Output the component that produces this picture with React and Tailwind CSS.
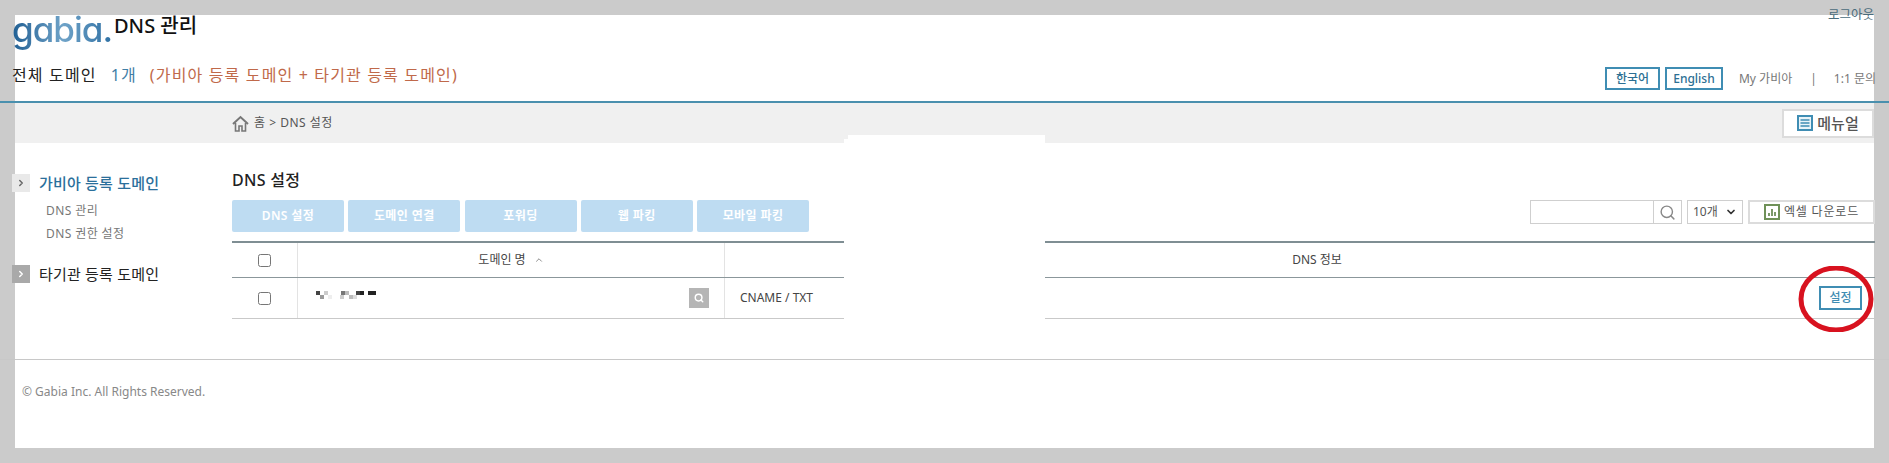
import { ChevronDown, ChevronRight, ChevronUp, Search } from "lucide-react";

const tabs = ["DNS 설정", "도메인 연결", "포워딩", "웹 파킹", "모바일 파킹"];

// 가려진 도메인 이름 (모자이크)
const mosaic = [
  [0, 0, "#444"], [4, 4, "#999"], [8, 0, "#ccc"], [12, 4, "#eee"], [24, 4, "#ccc"],
  [25, 0, "#777"], [29, 0, "#bbb"], [33, 4, "#bbb"], [37, 4, "#ddd"], [40, 0, "#444"],
  [44, 0, "#222"], [52, 0, "#222"], [56, 0, "#222"],
];

function HomeIcon() {
  return (
    <svg width="17" height="17" viewBox="0 0 17 17" fill="none" stroke="#777" strokeWidth="2">
      <path d="M1 9 8.5 2 16 9" />
      <path d="M3.5 8v8h3.5v-5h3v5h3.5V8" strokeWidth="1.6" />
    </svg>
  );
}

function MenuIcon() {
  return (
    <svg width="16" height="16" viewBox="0 0 16 16">
      <rect width="16" height="16" fill="#3f8db3" />
      <rect x="2" y="2" width="12" height="12" fill="#e8f3f8" />
      <path d="M3.5 5h9M3.5 8h9M3.5 11h9" stroke="#3f8db3" strokeWidth="1.5" />
    </svg>
  );
}

function ExcelIcon() {
  return (
    <svg width="16" height="16" viewBox="0 0 16 16">
      <rect x="1" y="1" width="14" height="14" fill="#fff" stroke="#6f9158" strokeWidth="2" />
      <path d="M5 12V9M8 12V5M11 12V8" stroke="#5d8046" strokeWidth="1.6" />
    </svg>
  );
}

function SideItem({ label, active }) {
  return (
    <div className="flex items-center gap-[9px] -ml-[3px]">
      <span className={`w-[18px] h-[18px] flex items-center justify-center ${active ? "bg-[#e9e9e9] text-[#666]" : "bg-[#a9a9a9] text-white"}`}>
        <ChevronRight size={10} strokeWidth={3.5} />
      </span>
      <span className={`text-[15px] tracking-[0.2px] leading-[18px] ${active ? "text-[#2b6f9b] font-medium" : "text-[#222]"}`}>
        {label}
      </span>
    </div>
  );
}

export default function App() {
  return (
    <div className="h-[463px] overflow-hidden bg-[#cbcbcb] p-[15px] font-['Noto_Sans','Noto_Sans_CJK_KR',sans-serif]">
      <div className="relative h-[433px] bg-white flex flex-col">
        {/* Top header */}
        <header className="h-[86px] flex flex-col">
          <div className="flex items-start h-[44px] -ml-[3px]">
            <span className="-mt-[12px] w-[102px] text-[35px] leading-[52px] font-['Inter',sans-serif] font-medium tracking-[-1px] [font-feature-settings:'cv11'] bg-gradient-to-r from-[#1f5f93] via-[#6fa3c8] to-[#2c6fa3] bg-clip-text text-transparent">
              gabia.
            </span>
            <span className="mt-[-2px] text-[20px] leading-[26px] font-medium text-[#111]">DNS 관리</span>
            <span className="ml-auto -mt-[9px] text-[12.5px] leading-[18px] text-[#4a6c7c]">로그아웃</span>
          </div>
          <div className="flex items-start -ml-[3px]">
            <div className="flex text-[16px] leading-[22px] tracking-[1.15px] mt-[5px]">
              <span className="text-[#222]">전체 도메인</span>
              <span className="ml-[14px] text-[#3f7ea6]">1개</span>
              <span className="ml-[13px] text-[#c0694a]">(가비아 등록 도메인 + 타기관 등록 도메인)</span>
            </div>
            <div className="ml-auto -mr-[2px] flex items-center mt-[8px] text-[12px] text-[#777]">
              <span className="w-[55px] h-[23px] flex items-center justify-center border-2 border-[#3f8db3] text-[#2c6f93] font-medium">한국어</span>
              <span className="ml-[5px] w-[58px] h-[23px] flex items-center justify-center border-2 border-[#3f8db3] text-[#2c6f93] font-medium">English</span>
              <span className="ml-[16px]">My 가비아</span>
              <span className="ml-[18px]">|</span>
              <span className="ml-[17px]">1:1 문의</span>
            </div>
          </div>
        </header>

        <div className="-mx-[15px] h-[2px] bg-[#4a90ae]" />

        {/* Breadcrumb band */}
        <div className="h-[40px] bg-[#f0f0f0] flex items-center pl-[217px]">
          <HomeIcon />
          <span className="ml-[5px] text-[12px] tracking-[0.5px] text-[#555]">홈 &gt; DNS 설정</span>
          <button className="ml-auto h-[29px] w-[92px] bg-white border-2 border-[#dcdcdc] flex items-center justify-center gap-[4px] text-[15px] font-medium text-[#555]">
            <MenuIcon />
            메뉴얼
          </button>
        </div>

        {/* Main */}
        <main className="h-[216px] flex">
          <aside className="w-[217px] shrink-0 pt-[31px]">
            <SideItem label="가비아 등록 도메인" active />
            <div className="mt-[7px] ml-[31px] text-[12px] leading-[23px] tracking-[0.4px] text-[#777]">
              <div>DNS 관리</div>
              <div>DNS 권한 설정</div>
            </div>
            <div className="mt-[20px]">
              <SideItem label="타기관 등록 도메인" />
            </div>
          </aside>

          <section className="flex-1 min-w-0 -mr-[1px] pt-[25px]">
            <h2 className="text-[16px] leading-[24px] font-medium tracking-[0.3px] text-[#222]">DNS 설정</h2>
            <div className="mt-[8px] flex items-start justify-between">
              <div className="flex gap-[4.25px]">
                {tabs.map((t) => (
                  <button key={t} className="w-[112px] h-[32px] rounded-[2px] bg-[#bedcf2] text-[12px] tracking-[0.4px] font-semibold text-white">
                    {t}
                  </button>
                ))}
              </div>
              <div className="flex items-stretch h-[24px]">
                <div className="w-[124px] border border-[#cfcfcf]" />
                <div className="w-[28px] border border-l-0 border-[#cfcfcf] flex items-center justify-center text-[#888]">
                  <Search size={17} strokeWidth={2} />
                </div>
                <div className="ml-[5px] w-[56px] border border-[#cfcfcf] flex items-center justify-between pl-[5px] pr-[5px] text-[12px] text-[#555]">
                  10개
                  <ChevronDown size={12} strokeWidth={3.5} className="text-[#333]" />
                </div>
                <button className="ml-[5px] w-[127px] border-2 border-[#dcdcdc] flex items-center justify-center gap-[4px] text-[12px] tracking-[0.8px] text-[#555]">
                  <ExcelIcon />
                  엑셀 다운로드
                </button>
              </div>
            </div>

            <div className="mt-[9px] border-t-2 border-[#7f8e93] text-[12px] text-[#444]">
              <div className="grid grid-cols-[66px_427px_1fr] h-[35px] border-b border-[#8b979b]">
                <div className="flex items-center justify-center border-r border-[#e3e3e3]">
                  <input type="checkbox" className="m-0" />
                </div>
                <div className="flex items-center justify-center border-r border-[#e3e3e3]">
                  도메인 명
                  <ChevronUp size={10} strokeWidth={2} className="ml-[8px] text-[#777]" />
                </div>
                <div className="flex items-center justify-center pl-[34px]">DNS 정보</div>
              </div>
              <div className="grid grid-cols-[66px_427px_1fr] h-[41px] border-b border-[#c9c9c9]">
                <div className="flex items-center justify-center border-r border-[#e3e3e3]">
                  <input type="checkbox" className="m-0" />
                </div>
                <div className="flex items-center justify-between pl-[18px] pr-[15px] border-r border-[#e3e3e3]">
                  <svg width="60" height="8" viewBox="0 0 60 8" className="-mt-[7px]">
                    {mosaic.map(([x, y, c]) => (
                      <rect key={x + "-" + y} x={x} y={y} width="4" height="4" fill={c} />
                    ))}
                  </svg>
                  <span className="w-[20px] h-[20px] bg-[#b5b5b5] flex items-center justify-center text-white">
                    <Search size={10} strokeWidth={3.5} />
                  </span>
                </div>
                <div className="flex items-center justify-between pl-[15px] pr-[13px]">
                  CNAME / TXT
                  <button className="w-[43px] h-[24px] border-2 border-[#3f8db3] text-[#3f8db3] text-[12px] font-medium">설정</button>
                </div>
              </div>
            </div>
          </section>
        </main>

        <div className="-mx-[15px] h-[1px] bg-[#c8c8c8]" />

        <footer className="pl-[7px] pt-[22px] text-[12px] leading-[20px] text-[#888]">© Gabia Inc. All Rights Reserved.</footer>

        {/* 지운 영역 */}
        <div className="absolute left-[833px] top-[120px] w-[197px] h-[186px] bg-white" />
        <div className="absolute left-[829px] top-[124px] w-[4px] h-[182px] bg-white" />

        {/* 빨간 동그라미 */}
        <svg className="absolute left-[1783px] top-[251px]" width="80" height="66" viewBox="0 0 80 66" fill="none">
          <ellipse cx="38" cy="33" rx="35" ry="31" stroke="#d8121f" strokeWidth="5" />
        </svg>
      </div>
    </div>
  );
}
